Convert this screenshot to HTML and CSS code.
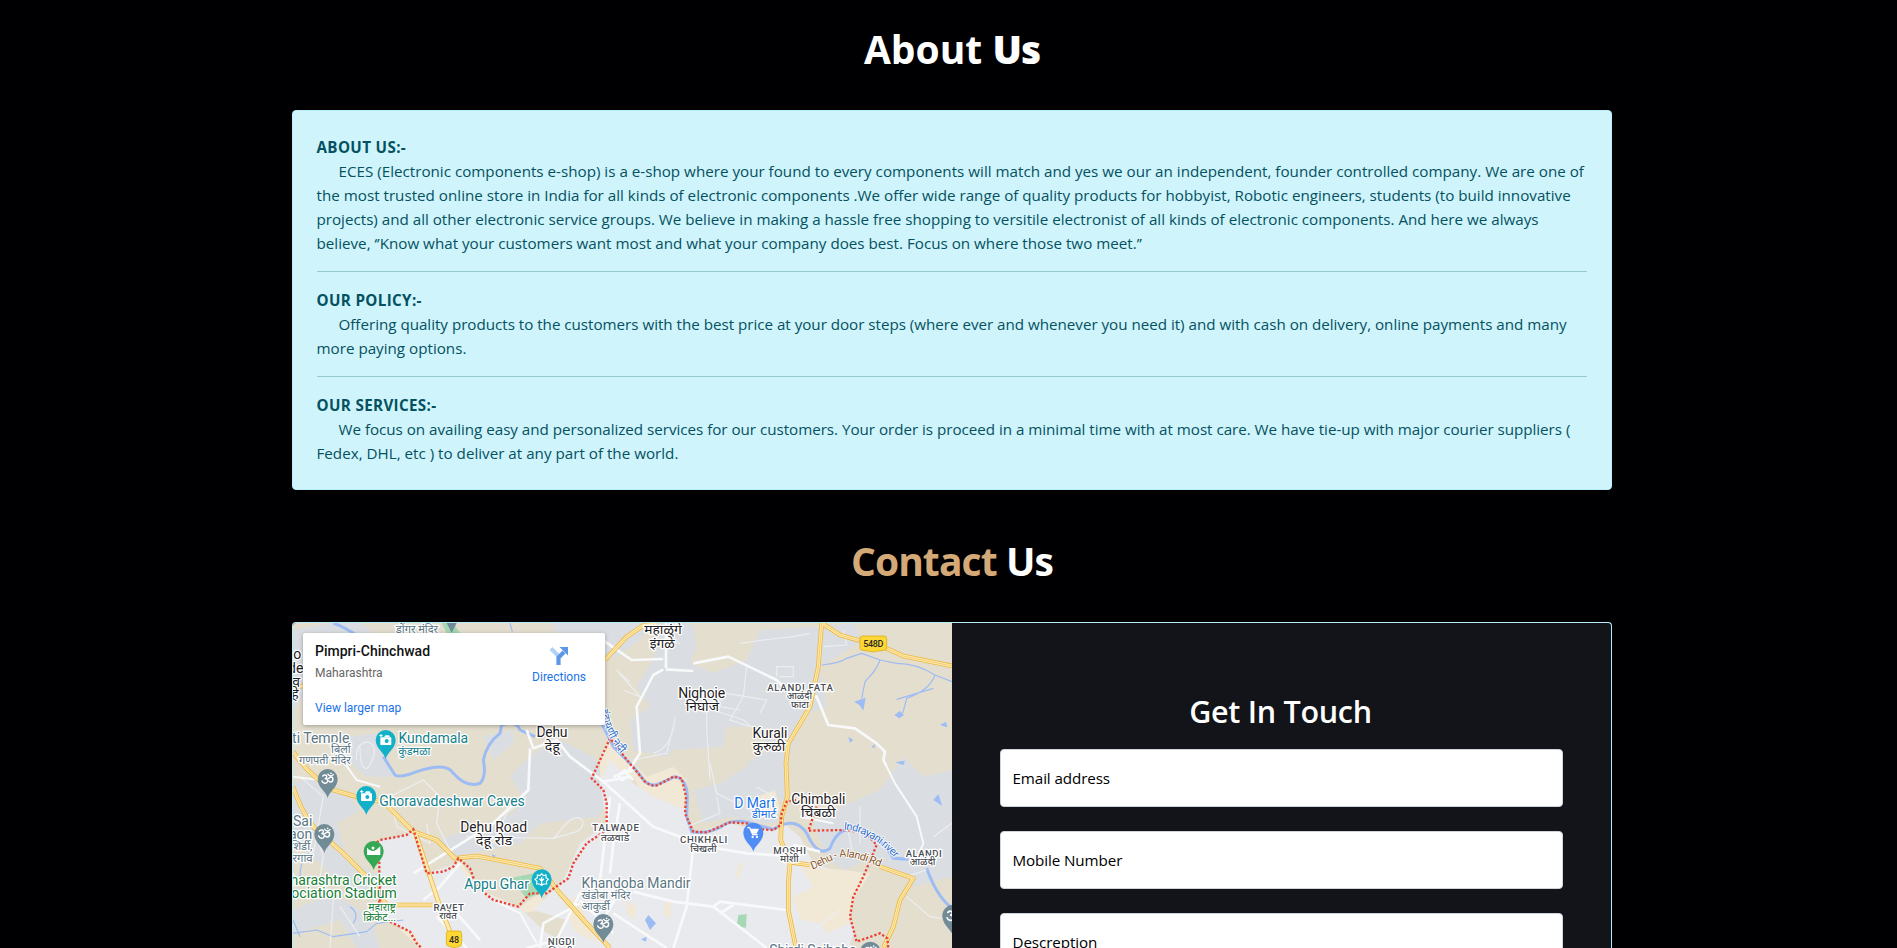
FILE: index.html
```html
<!DOCTYPE html>
<html lang="en">
<head>
<meta charset="utf-8">
<title>About Us</title>
<link rel="stylesheet" href="styles.css">
</head>
<body>
<main class="container">
  <h1 class="heading"><span class="about">About</span> <span class="heavy">Us</span></h1>
  <section class="alert">
    <b class="topic">ABOUT US:-</b>
    <p class="copy">
      <span class="ln indent l1">ECES (Electronic components e-shop) is a e-shop where your found to every components will match and yes we our an independent, founder controlled company. We are one of</span>
      <span class="ln l2">the most trusted online store in India for all kinds of electronic components .We offer wide range of quality products for hobbyist, Robotic engineers, students (to build innovative</span>
      <span class="ln l3">projects) and all other electronic service groups. We believe in making a hassle free shopping to versitile electronist of all kinds of electronic components. And here we always</span>
      <span class="ln l4">believe, ‘’Know what your customers want most and what your company does best. Focus on where those two meet.’’</span>
    </p>
    <hr class="rule">
    <b class="topic">OUR POLICY:-</b>
    <p class="copy">
      <span class="ln indent l5">Offering quality products to the customers with the best price at your door steps (where ever and whenever you need it) and with cash on delivery, online payments and many</span>
      <span class="ln l6">more paying options.</span>
    </p>
    <hr class="rule">
    <b class="topic">OUR SERVICES:-</b>
    <p class="copy">
      <span class="ln indent l7">We focus on availing easy and personalized services for our customers. Your order is proceed in a minimal time with at most care. We have tie-up with major courier suppliers (</span>
      <span class="ln l8">Fedex, DHL, etc ) to deliver at any part of the world.</span>
    </p>
  </section>

  <h1 class="heading contact"><span class="gold">Contact</span> <span class="us">Us</span></h1>
  <section class="panel">
    <div class="map">
      <svg class="tiles" viewBox="39 39 1977 975" preserveAspectRatio="none">
        <defs>
          <g id="pin"><path d="M0 57C-4 38-30 26-30 0A30 30 0 0 1 30 0C30 26 4 38 0 57Z"/></g>
          <g id="cam"><rect x="-16" y="-8" width="33" height="23" rx="2" fill="#fff"/><path d="M-5-8l4-6h11l3 6z" fill="#fff"/><circle cx="3" cy="3" r="6" fill="#12b0c9"/><path d="M-14-18v9M-19-13h10" stroke="#fff" stroke-width="3"/></g>
          <g id="om"><path d="M-15-9C-7-16 0-10-4-4-6-1-9-1-9-1-2-2 2 3-1 9-4 15-14 14-17 6M-4 0C3 2 5-6 11-6 18-5 17 9 9 9 5 9 4 6 4 6M1-14C5-8 13-8 17-13" fill="none" stroke="#fff" stroke-width="4.4" stroke-linecap="round"/><circle cx="10" cy="-17" r="2.6" fill="#fff"/></g>
          <path id="river-name" d="M1691 659Q1775 664 1850 752"/>
          <path id="road-name" d="M1597 779C1640 762 1668 738 1700 741C1740 745 1770 760 1815 777"/>
          <path id="nadi" d="M962 300Q972 372 1022 430"/>
        </defs>
        <rect class="tan" x="39" y="39" width="1977" height="975"/>
        <g class="grey">
          <path d="M39 60L160 39H240L280 69H69V260L39 300ZM39 520L110 500 190 540 240 600 170 640 200 740 300 800 260 860 200 840 120 760 39 700Z"/>
          <path d="M820 39H1110L1080 90 1010 140 975 150 820 60ZM620 640L700 610 730 560 690 500 750 440 830 385 940 440 990 520 960 620 780 640 720 700 520 740 480 690Z"/>
          <path d="M1150 39L1240 45 1250 110 1230 160 1300 190 1400 150 1440 60 1620 50 1720 39 1750 90 1620 170 1640 290 1560 320 1530 440 1510 570 1420 540 1400 460 1470 420 1430 350 1340 350 1330 410 1180 420 1160 440 1060 420 1050 330 1110 290 1070 230 1120 150Z"/>
          <path d="M1320 520L1400 470 1480 520 1500 640 1440 640 1360 620 1270 640 1240 540ZM1660 600L1800 540 1870 440 1930 500 2016 480V800L1900 830 1760 750 1690 780 1640 740 1600 640Z"/>
          <path d="M200 380L300 370 340 500 260 500 190 440ZM610 380L700 360 700 400 640 450ZM39 900L160 850 270 920 300 1014H230L180 930 39 970Z"/>
        </g>
        <g class="cream">
          <path d="M960 440L985 385 1100 500 1180 470 1220 510 1215 640 1180 610 1090 560 1060 500 1000 560 960 520Z"/>
          <path d="M390 700L440 800 500 780 540 750 600 840 720 890 780 850 800 900 720 910 600 880 540 920 420 800 340 790 300 700ZM340 800L450 850 420 900 340 900ZM390 950L490 1014H420L360 960Z"/>
        </g>
        <g class="city">
          <path d="M980 640L960 520 990 450 1060 520 1120 560 1215 600 1235 670 1350 640 1440 665 1510 640 1560 680 1600 760 1720 800 1780 840 1710 1000 1720 1014H830L860 930 760 900 850 810 900 700Z"/>
          <path d="M300 690L400 670 440 790 530 760 590 840 720 895 800 970 900 1014H430L390 960 310 930 300 800Z"/>
        </g>
        <path class="tan" d="M1760 790L1900 800 1850 900 1820 990 1730 1000 1705 900Z"/>
        <g class="cream">
          <path d="M1560 770L1690 780 1770 790 1715 880 1712 940 1640 970 1620 940 1560 930 1540 860 1600 830ZM1365 800L1380 755 1388 760 1376 808ZM1155 880L1175 870 1170 930 1150 910ZM1040 870L1070 895 1060 930 1040 910ZM850 870L890 860 950 1000 880 960ZM1430 560L1485 540 1500 600 1440 600Z"/>
        </g>
        <path class="park" d="M485 39H520L540 70H500ZM690 805L760 790 780 850 740 865ZM1375 915L1400 913 1398 953 1370 950Z"/>
        <g class="water">
          <path d="M310 440L345 495Q360 505 410 485Q500 455 520 490Q560 535 600 520Q620 500 610 450Q620 400 660 370L665 345Q710 330 720 360L765 380"/>
          <path d="M160 39Q190 50 225 72M960 330L1000 410 1060 470 1095 515Q1120 532 1140 520L1185 500Q1220 505 1222 560L1220 620 1235 665Q1290 675 1340 640Q1380 625 1430 645L1480 658Q1510 640 1530 640Q1570 640 1590 690Q1620 740 1650 715Q1670 660 1710 658Q1790 660 1840 745L1885 748M1940 775Q1970 860 2016 895"/>
          <path class="thin" d="M690 39L697 65M1625 165Q1680 160 1700 145L1745 130 1800 150 1850 160Q1910 160 1965 195L2016 215M1800 150Q1790 180 1755 215L1745 265M1965 195Q1950 240 1880 265L1868 310M1960 235L1850 268M39 970L110 960 160 980 260 965 290 940 370 930M60 800Q60 740 100 720M39 930L60 980M210 890Q240 910 220 940"/>
          <path class="lake" d="M1722 275L1757 263 1750 302 1738 285ZM1843 315L1860 303 1872 315 1858 325ZM1980 345L1998 335 2002 352ZM1705 380L1720 390 1710 398ZM1845 457L1875 452 1870 465ZM1775 410L1785 403 1783 415ZM1960 570L1975 552 1987 588ZM1095 930L1105 915 1128 940 1110 960ZM1083 988L1100 980 1098 995ZM635 733L648 738 640 742Z"/>
        </g>
        <g class="lane">
          <path d="M60 200L120 250 70 320M90 90L150 140M100 730L130 560 60 500M230 450C220 380 300 380 280 440S240 480 240 410M440 640L450 700 350 650 330 560 430 510 480 560 470 640 520 740M560 680L820 685 860 640C900 600 930 640 890 665L820 685M640 700L680 610 740 560M110 680L130 740 120 800 160 870 150 1014M180 890L240 980M300 860L400 900M1180 350L1160 430 1060 450M1185 320Q1180 410 1120 430M1280 260L1280 360 1290 510M1400 170L1390 260 1350 330 1410 350M1340 250L1460 270 1440 310M1500 200H1540V170H1490V200M1240 240L1320 290 1380 300M1220 280L1330 270M1300 300L1390 330 1420 355M1120 85L1200 100M1380 100L1450 90 1540 80 1590 70M1630 110L1700 105 1690 60M1310 560L1320 610 1220 650M1430 530L1480 560 1490 610M1290 460L1310 550 1390 590M1700 640L1720 740M1740 590L1740 700M1960 680L2016 640M1880 800L1940 780M1880 860L1950 920 2016 930M1680 900L1600 960M1010 180L1080 260 1030 240M1020 190L1050 215"/>
        </g>
        <g class="road">
          <path d="M975 95L1055 150 1150 147M1158 39V175M1158 178L1240 183M1150 178L1120 195 1070 290 1080 430 1040 490M1240 160L1345 140 1490 210 1540 260 1610 260 1645 345 1725 355 1790 400 1815 425 1810 450 1820 470" class="main"/>
          <path d="M740 360L760 415 830 390 870 440 970 515 1120 650 1280 710 1400 730 1560 740M1040 490L1060 510M1000 500L1060 480M990 560L960 810M1020 580L1000 700 990 790M970 515L1050 500M1540 705L1620 725" class="main"/>
          <path d="M750 415L745 540 640 640 400 790M540 760L480 830 430 870M530 910L600 990M470 920L560 1014M1240 710L1220 890 1180 1014M1060 845L1180 875 1300 890 1460 1014M1300 890L1320 875 1520 900M1000 910L1160 1014M1010 860L950 960M900 870L1000 970M740 1014L830 990 900 850 1040 840M1360 885L1320 910M780 1014L790 940 900 880" class="main"/>
          <path d="M1820 470L1845 520 1910 620 1930 700 1910 745M1560 620L1660 640M640 870L720 910 770 1000M39 500L120 510 170 540M150 400L230 510 300 530"/>
          <path d="M1015 495L1035 480 1045 500 1025 510Z" class="main"/>
        </g>
        <g>
          <path class="hw-edge" d="M39 425Q90 500 160 540L240 563 310 575 400 665 470 690 525 745 590 738 780 775 840 850 920 940 990 1014M39 530Q70 620 110 660L190 730 270 810 320 885 470 885M405 665L450 800 480 890 530 1014M39 230L70 228M975 150L1040 80 1090 46 1130 42M1625 39L1615 170 1590 290 1525 400 1518 460 1522 560 1505 620 1502 690 1530 760 1525 820 1525 900 1548 1014M1625 39L1680 75 1740 92M1820 115L1870 138 2016 168M1535 757L1590 765M1800 770L1900 805 1860 870 1840 950 1810 1014"/>
          <path class="hw-fill" d="M39 425Q90 500 160 540L240 563 310 575 400 665 470 690 525 745 590 738 780 775 840 850 920 940 990 1014M39 530Q70 620 110 660L190 730 270 810 320 885 470 885M405 665L450 800 480 890 530 1014M39 230L70 228M975 150L1040 80 1090 46 1130 42M1625 39L1615 170 1590 290 1525 400 1518 460 1522 560 1505 620 1502 690 1530 760 1525 820 1525 900 1548 1014M1625 39L1680 75 1740 92M1820 115L1870 138 2016 168M1535 757L1590 765M1800 770L1900 805 1860 870 1840 950 1810 1014"/>
          <path class="hw-core" d="M39 425Q90 500 160 540L240 563 310 575 400 665 470 690 525 745 590 738 780 775 840 850 920 940 990 1014M39 530Q70 620 110 660L190 730 270 810 320 885 470 885M975 150L1040 80 1090 46M1625 39L1615 170 1590 290 1525 400 1518 460 1522 560 1505 620 1502 690 1530 760 1525 820 1525 900 1548 1014M1625 39L1680 75 1740 92M1820 115L1870 138 2016 168M1535 757L1590 765M1800 770L1900 805 1860 870 1840 950 1810 1014"/>
        </g>
        <path class="border" d="M280 705L300 690 380 675 400 658 440 790 490 785 520 770 535 745 570 775 590 830 640 870 715 890 750 850 800 850 865 805 880 760 920 700 980 660V580L970 540 935 505 990 385 1045 455 1095 515Q1120 535 1140 522L1180 500 1205 505 1218 560 1215 610 1240 665 1280 667 1350 637 1400 640 1440 658 1480 660 1502 645 1505 610 1520 575 1550 570M1610 590L1585 662 1700 660 1760 670 1790 705 1750 800 1720 860 1710 920 1730 995 1800 970 1822 985 1825 1014M298 755V880M300 800V900M330 935L390 965 410 1000 425 1014"/>
        <g class="shield"><path d="M1748 78H1812Q1820 78 1820 86V115Q1820 120 1812 121L1795 123 1780 126 1765 123 1748 121Q1740 120 1740 115V86Q1740 78 1748 78Z"/><path d="M507 963H537Q545 963 545 971V1000Q545 1008 537 1009L522 1013 507 1009Q499 1008 499 1000V971Q499 963 507 963Z"/></g>
        <text class="num" x="1780" y="112" textLength="60">548D</text>
        <text class="num" x="522" y="998" textLength="30">48</text>

        <g class="town">
          <text x="64" y="147" class="end">.o</text><text x="70" y="190" class="end">de</text><text x="60" y="230" class="end">व</text><text x="56" y="268" class="end">हे</text>
          <text x="816" y="380" textLength="93">Dehu</text><text x="817" y="422" textLength="46" lengthAdjust="spacingAndGlyphs" class="hi">देहू</text>
          <text x="641" y="666" textLength="201">Dehu Road</text><text x="642" y="705" textLength="109" lengthAdjust="spacingAndGlyphs" class="hi">देहू रोड</text>
          <text x="1149" y="72" textLength="112" lengthAdjust="spacingAndGlyphs" class="hi">महाळुंगे</text><text x="1147" y="115" textLength="75" lengthAdjust="spacingAndGlyphs" class="hi">इंगळे</text>
          <text x="1265" y="265" textLength="141">Nighoje</text><text x="1267" y="303" textLength="100" lengthAdjust="spacingAndGlyphs" class="hi">निघोजे</text>
          <text x="1470" y="385" textLength="105">Kurali</text><text x="1467" y="424" textLength="98" lengthAdjust="spacingAndGlyphs" class="hi">कुरुळी</text>
          <text x="1615" y="582" textLength="163">Chimbali</text><text x="1615" y="622" textLength="104" lengthAdjust="spacingAndGlyphs" class="hi">चिंबळी</text>
        </g>
        <g class="suburb">
          <text x="1007" y="664" textLength="140">TALWADE</text><text x="1005" y="692" textLength="86" lengthAdjust="spacingAndGlyphs">तळवाडे</text>
          <text x="506" y="902" textLength="91">RAVET</text><text x="504" y="927" textLength="53" lengthAdjust="spacingAndGlyphs">रावेत</text>
          <text x="844" y="1006" textLength="81">NIGDI</text><text x="842" y="1034" textLength="75" lengthAdjust="spacingAndGlyphs">निगडी</text>
          <text x="1560" y="242" textLength="197">ALANDI FATA</text><text x="1558" y="268" textLength="76" lengthAdjust="spacingAndGlyphs">आळंदी</text><text x="1560" y="294" textLength="54" lengthAdjust="spacingAndGlyphs">फाटा</text>
          <text x="1271" y="700" textLength="142">CHIKHALI</text><text x="1270" y="727" textLength="79" lengthAdjust="spacingAndGlyphs">चिखली</text>
          <text x="1529" y="731" textLength="98">MOSHI</text><text x="1528" y="755" textLength="56" lengthAdjust="spacingAndGlyphs">मोशी</text>
          <text x="1931" y="740" textLength="108">ALANDI</text><text x="1928" y="765" textLength="77" lengthAdjust="spacingAndGlyphs">आळंदी</text>
        </g>
        <g class="temple">
          <text x="411" y="68" textLength="127" lengthAdjust="spacingAndGlyphs" class="hs">डोंगर मंदिर</text>
          <text x="208" y="400" class="end">ti Temple</text><text x="212" y="430" textLength="59" lengthAdjust="spacingAndGlyphs" class="end hs">बिर्ला</text><text x="212" y="463" textLength="155" lengthAdjust="spacingAndGlyphs" class="end hs">गणपती मंदिर</text>
          <text x="97" y="648" class="end">Sai</text><text x="97" y="688" class="end">gaon</text><text x="97" y="720" class="end hs">शिर्डी,</text><text x="98" y="755" class="end hs">शिरगाव</text>
          <text x="1068" y="834" textLength="327">Khandoba Mandir</text><text x="978" y="868" textLength="147" lengthAdjust="spacingAndGlyphs" class="hs">खंडोबा मंदिर</text><text x="947" y="900" textLength="85" lengthAdjust="spacingAndGlyphs" class="hs">आकुर्डी</text>
          <text x="1599" y="1034" textLength="262">Shirdi Saibaba</text>
        </g>
        <g class="sight">
          <text x="460" y="400" textLength="209">Kundamala</text><text x="403" y="435" textLength="97" lengthAdjust="spacingAndGlyphs" class="hs">कुंडमळा</text>
          <text x="516" y="588" textLength="437">Ghoravadeshwar Caves</text><text x="650" y="837" textLength="194">Appu Ghar</text>
        </g>
        <g class="sport">
          <text x="350" y="825" class="end">Maharashtra Cricket</text><text x="350" y="865" class="end">Association Stadium</text>
          <text x="306" y="903" textLength="83" lengthAdjust="spacingAndGlyphs" class="hs">महाराष्ट्र</text><text x="299" y="934" textLength="99" lengthAdjust="spacingAndGlyphs" class="hs">क्रिकेट...</text>
        </g>
        <g class="shop"><text x="1425" y="594" textLength="124">D Mart</text><text x="1452" y="625" textLength="74" lengthAdjust="spacingAndGlyphs" class="hs">डीमार्ट</text></g>
        <text class="curve blue"><textPath href="#river-name" textLength="180">Indrayani river</textPath></text>
        <text class="curve brown"><textPath href="#road-name" textLength="216">Dehu - Alandi Rd</textPath></text>
        <text class="curve blue"><textPath href="#nadi">इंद्रायणी नदी</textPath></text>

        <path class="slate" d="M500 39H530L515 68Z"/>
        <g transform="translate(317 390)"><use href="#pin" class="cyan"/><use href="#cam"/></g>
        <g transform="translate(259 558)"><use href="#pin" class="cyan"/><use href="#cam"/></g>
        <g transform="translate(143 507)"><use href="#pin" class="slate"/><use href="#om"/></g>
        <g transform="translate(133 672)"><use href="#pin" class="slate"/><use href="#om"/></g>
        <g transform="translate(970 942)"><use href="#pin" class="slate"/><use href="#om"/></g>
        <g transform="translate(2020 917) scale(1.1)"><use href="#pin" class="slate"/><use href="#om"/></g>
        <g transform="translate(1771 1025)"><use href="#pin" class="slate"/><use href="#om"/></g>
        <g transform="translate(281 723)"><use href="#pin" class="green"/><path d="M-20-10Q-8 6 8-4L20-14V12H-20Z" fill="#fff"/><circle cx="-2" cy="-9" r="4.5" fill="#fff"/></g>
        <g transform="translate(785 808)"><use href="#pin" class="cyan"/><path d="M0-17l5 6 8-2 0 8 7 5-6 6 1 8-9 0-6 4-6-4-9 0 1-8-6-6 7-5 0-8 8 2z" fill="none" stroke="#fff" stroke-width="3.5"/><path d="M0-7V18M-7-2L0 5 7-2" fill="none" stroke="#fff" stroke-width="4"/></g>
        <g transform="translate(1420 668)"><use href="#pin" class="azure"/><path d="M-18-15h7l9 21H13" fill="none" stroke="#fff" stroke-width="3.5"/><path d="M-9-12H17L10 3H-3Z" fill="#fff"/><circle cx="-2" cy="13" r="3.5" fill="#fff"/><circle cx="11" cy="13" r="3.5" fill="#fff"/></g>
      </svg>
      <div class="place">
        <div class="info">
          <div class="name">Pimpri-Chinchwad</div>
          <div class="state">Maharashtra</div>
          <a class="link">View larger map</a>
        </div>
        <div class="dir">
          <svg class="arrow" viewBox="0 0 18 18"><path d="M1 1.5L8.5 9" stroke="#b3d1f7" stroke-width="4"/><path d="M8.5 18V10.5L14 5" stroke="#5e97e8" stroke-width="4.2" fill="none"/><path d="M9.5 0H18V8.5Z" fill="#5e97e8"/></svg>
          <a class="link">Directions</a>
        </div>
      </div>
    </div>
    <form class="form">
      <h2 class="touch">Get In Touch</h2>
      <div class="field"><span class="f1">Email address</span></div>
      <div class="field"><span class="f2">Mobile Number</span></div>
      <div class="field"><span class="f3">Descreption</span></div>
    </form>
  </section>
</main>
</body>
</html>
```
FILE: styles.css
```css
*{box-sizing:border-box}
html,body{height:100%}
body{margin:0;background:#000003;overflow:hidden;font-family:"Open Sans","Noto Sans",sans-serif;font-size:15.2px;line-height:24px}
.container{width:1320px;height:948px;overflow:hidden;margin-left:292px}
.heading{margin:0;height:110px;padding-top:25px;text-align:center;color:#fff;font-size:39px;line-height:48px;font-weight:700;white-space:nowrap;letter-spacing:0}
.heavy{font-weight:800;letter-spacing:-1px}
.contact{height:132px;padding-top:47px;letter-spacing:-.9px}
.gold{color:#d4a978}
.alert{height:380px;padding:24px 24px 24px 23.5px;border:1px solid #b6effb;border-radius:4px;background:#cff4fc;color:#055160}
.topic{display:block;font-weight:700;letter-spacing:.35px}
.copy{margin:0}
.ln{display:block;white-space:nowrap;width:max-content}
.l3{letter-spacing:-.008px}
.l5{letter-spacing:-.024px}
.l7{letter-spacing:-.03px}
.indent{margin-left:22px}
.rule{height:1px;margin:16px 0;border:0;background:#055160;opacity:.27}
.panel{display:flex;height:326px;border:1px solid #b6effb;border-bottom:0;border-radius:4px 4px 0 0;background:#121419;overflow:hidden}
.map{position:relative;width:659px;flex:none}
.tiles{display:block;width:659px;height:325px}
.place{position:absolute;left:10px;top:10px;width:302px;height:92px;display:flex;justify-content:space-between;padding:9px 19px 0 12px;background:#fff;border-radius:2px;box-shadow:0 1px 4px rgba(0,0,0,.3);font-family:Roboto,sans-serif;font-size:12px;line-height:16px}
.name{font-size:14px;font-weight:500;line-height:18px;color:#111}
.state{margin:5px 0 19px;color:#666}
.link{color:#1a73e8;display:block}
.dir{display:flex;flex-direction:column;align-items:center;padding-top:5px}
.arrow{width:18px;height:18px;margin-bottom:4px}
.form{flex:1;padding:66px 48px 0 48px;display:flex;flex-direction:column;overflow:hidden}
.touch{margin:0 2px 0 0;height:60px;flex:none;text-align:center;color:#fff;font-size:30.5px;line-height:44px;font-weight:600;letter-spacing:-.3px}
.field{height:58px;flex:none;margin-bottom:24px;border:1px solid #ced4da;border-radius:4px;background:#fff;color:#000;padding:16px 11.5px;letter-spacing:-.1px}
.field span{display:inline-block;white-space:nowrap}

.tan{fill:#e4decf}
.grey{fill:#dadee2}
.cream{fill:#f1e8d6}
.city{fill:#e8eaee}
.park{fill:#a5d8b3}
.water path{fill:none;stroke:#9dbcf3;stroke-width:9;stroke-linejoin:round}
.water .thin{stroke-width:3.5}
.water .lake{fill:#9dbcf3;stroke:none}
.lane{fill:none;stroke:#eceef1;stroke-width:3.5}
.road{fill:none;stroke:#f8f9fa;stroke-width:6;stroke-linejoin:round}
.road .main{stroke-width:8}
.hw-edge,.hw-fill,.hw-core{fill:none;stroke-linejoin:round}
.hw-edge{stroke:#edb73c;stroke-width:14}
.hw-fill{stroke:#fdeab2;stroke-width:9}
.hw-core{stroke:#f0c050;stroke-width:2}
.border{fill:none;stroke:#ea4335;stroke-width:7;stroke-dasharray:7 6}
.shield{fill:#fdd835;stroke:#d6a400;stroke-width:2}
.tiles text{font-family:Roboto,"Noto Sans","Noto Sans Devanagari",sans-serif;font-size:42px;text-anchor:middle;paint-order:stroke;stroke:#fff;stroke-width:8px;stroke-linejoin:round}
.tiles .end{text-anchor:end}
.tiles .hi{font-size:40px}
.tiles .hs{font-size:34px}
.tiles .num{font-size:27px;stroke:none;fill:#2b2b2b;font-weight:500}
.town{fill:#1f2124}
.tiles .suburb text{font-size:29px;font-weight:500;fill:#4a4e54}
.temple{fill:#5b7684}
.sight{fill:#128089}
.sport{fill:#188038}
.shop{fill:#1a73e8}
.tiles .curve{font-size:33px;text-anchor:start;stroke-width:5px}
.blue{fill:#2d6cc9}
.brown{fill:#87521b}
.slate{fill:#718b97}
.cyan{fill:#12b0c9}
.green{fill:#34a853}
.azure{fill:#4f8df5}
```
